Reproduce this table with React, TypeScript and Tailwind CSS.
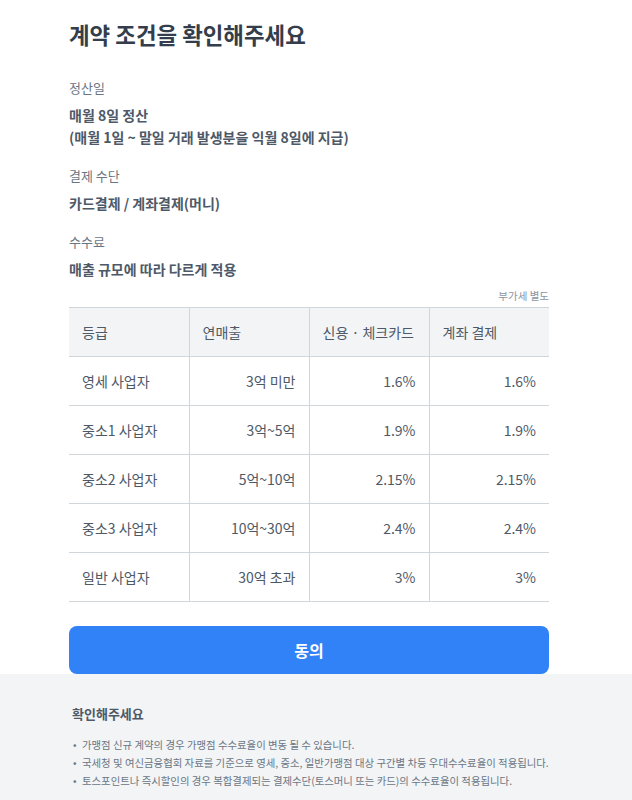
import React from 'react';

const font = { fontFamily: '"Noto Sans CJK KR", "Noto Sans", sans-serif' };

const rows = [
    ['영세 사업자', '3억 미만', '1.6%', '1.6%'],
    ['중소1 사업자', '3억~5억', '1.9%', '1.9%'],
    ['중소2 사업자', '5억~10억', '2.15%', '2.15%'],
    ['중소3 사업자', '10억~30억', '2.4%', '2.4%'],
    ['일반 사업자', '30억 초과', '3%', '3%'],
];

const notes = [
    '가맹점 신규 계약의 경우 가맹점 수수료율이 변동 될 수 있습니다.',
    '국세청 및 여신금융협회 자료를 기준으로 영세, 중소, 일반가맹점 대상 구간별 차등 우대수수료율이 적용됩니다.',
    '토스포인트나 즉시할인의 경우 복합결제되는 결제수단(토스머니 또는 카드)의 수수료율이 적용됩니다.',
];

const Field = ({ label, children }: { label: string; children: React.ReactNode }) => (
    <div className="flex flex-col">
        <div className="text-[13px] leading-[20px] text-[#6b7684]">{label}</div>
        <div className="mt-[6px] text-[14px] leading-[22px] font-semibold text-[#4e5968]">{children}</div>
    </div>
);

export default function App() {
    return (
        <div className="w-[632px] min-h-[800px] bg-white flex flex-col" style={font}>
            {/* Main */}
            <div className="pl-[69px] w-[549px] pt-[18px]">
                <h1 className="text-[22.4px] leading-[32px] font-bold text-[#333d4b]">계약 조건을 확인해주세요</h1>

                <div className="mt-[28px] flex flex-col gap-[18px]">
                    <Field label="정산일">
                        매월 8일 정산
                        <br />
                        (매월 1일 ~ 말일 거래 발생분을 익월 8일에 지급)
                    </Field>
                    <Field label="결제 수단">카드결제 / 계좌결제(머니)</Field>
                    <Field label="수수료">매출 규모에 따라 다르게 적용</Field>
                </div>

                <div className="mt-[9px] text-right text-[10.5px] leading-[14px] text-[#8b95a1]">부가세 별도</div>

                <table className="mt-[4px] w-[480px] border-collapse table-fixed text-[14px] text-[#4e5968]">
                    <thead>
                        <tr className="bg-[#f2f4f6] h-[49px] border-t border-b border-[#d1d6db]">
                            <th className="font-normal text-left px-[13px]">등급</th>
                            <th className="font-normal text-left px-[13px] border-l border-[#d1d6db]">연매출</th>
                            <th className="font-normal text-left px-[13px] border-l border-[#d1d6db]">신용 · 체크카드</th>
                            <th className="font-normal text-left px-[13px] border-l border-[#d1d6db]">계좌 결제</th>
                        </tr>
                    </thead>
                    <tbody>
                        {rows.map((r) => (
                            <tr key={r[0]} className="h-[49px] border-b border-[#d1d6db]">
                                <td className="text-left px-[13px]">{r[0]}</td>
                                <td className="text-right px-[13px] border-l border-[#d1d6db]">{r[1]}</td>
                                <td className="text-right px-[13px] border-l border-[#d1d6db]">{r[2]}</td>
                                <td className="text-right px-[13px] border-l border-[#d1d6db]">{r[3]}</td>
                            </tr>
                        ))}
                    </tbody>
                </table>

                <button className="mt-[24px] w-[480px] h-[48px] rounded-[8px] bg-[#3182f6] text-white text-[16px] font-bold">
                    동의
                </button>
            </div>

            {/* Footer notice */}
            <div className="flex-1 bg-[#f2f4f6] pl-[72px] pt-[30px] pb-[10px]">
                <div className="text-[13px] leading-[20px] font-bold text-[#4e5968]">확인해주세요</div>
                <ul className="mt-[12px] flex flex-col">
                    {notes.map((n) => (
                        <li key={n} className="flex text-[10.4px] leading-[18px] text-[#6b7684]">
                            <span className="w-[10px] pl-[1px]">•</span>
                            <span>{n}</span>
                        </li>
                    ))}
                </ul>
            </div>
        </div>
    );
}
